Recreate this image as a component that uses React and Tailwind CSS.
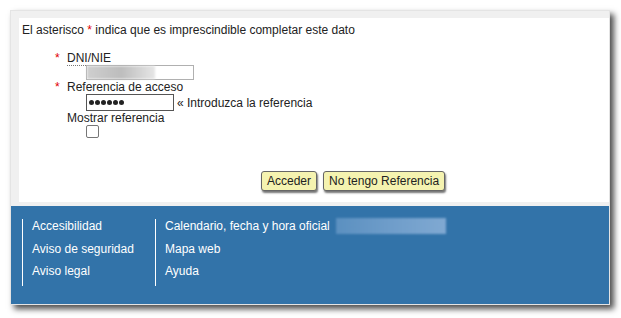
const Req = () => <span className="w-[12px] text-[#e00000]">*</span>;

const FooterCol = ({ links, extra, className = "" }) => (
  <ul className={`flex flex-col gap-[8.5px] border-l border-white pb-[8px] pl-[9px] ${className}`}>
    {links.map((l, i) => (
      <li key={l} className="flex h-[14px] items-center leading-[14px]">
        <span>{l}</span>
        {i === 0 && extra}
      </li>
    ))}
  </ul>
);

export default function App() {
  return (
    <div className="min-h-[318px] bg-white pl-[10px] pt-[10px] font-['Liberation_Sans',Arial,sans-serif] text-[12px] text-[#222]">
      <div className="w-[600px] border border-[#e4e4e4] bg-[#f0f0f0] shadow-[4px_4px_6px_rgba(0,0,0,0.7)]">
        <div className="pl-[8px] pt-[7px]">
          <div className="h-[184px] bg-white pl-[3px] pt-[5px]">
            <p className="leading-[14px]">
              El asterisco <span className="text-[#e00000]">*</span> indica que es imprescindible completar este dato
            </p>

            <div className="mt-[14px] pl-[33px]">
              <div className="flex leading-[14px]">
                <Req />
                <span>DNI/NIE</span>
              </div>
              <div className="flex">
                <div className="ml-[12px] w-[19px] border-t border-dotted border-[#777]" />
                <div className="flex h-[15px] w-[108px] border border-[#b0b0b0] bg-white">
                  <div className="h-full w-[68px] bg-gradient-to-r from-[#cfcfcf] via-[#bdbdbd] to-[#e6e6e6] blur-[1px]" />
                </div>
              </div>
              <div className="flex leading-[14px]">
                <Req />
                <span>Referencia de acceso</span>
              </div>
              <div className="flex items-center pl-[31px]">
                <div className="flex h-[17px] w-[88px] items-center gap-[1px] border border-[#555] bg-white pl-[2px]">
                  {[0, 1, 2, 3, 4, 5].map((i) => (
                    <span key={i} className="h-[5px] w-[5px] rounded-full bg-[#222]" />
                  ))}
                </div>
                <span className="ml-[3px] leading-[14px]">« Introduzca la referencia</span>
              </div>
              <div className="pl-[12px] leading-[14px]">Mostrar referencia</div>
              <div className="pl-[31px]">
                <div className="h-[13px] w-[13px] rounded-[2px] border border-[#767676] bg-white" />
              </div>
            </div>

            <div className="mt-[33px] flex gap-[6px] pl-[239px]">
              <button className="h-[20px] rounded-[3px] border border-[#666] bg-[#f5f3b0] px-[5px] leading-[14px] text-[#222] shadow-[1px_2px_2px_rgba(0,0,0,0.55)]">
                Acceder
              </button>
              <button className="h-[20px] rounded-[3px] border border-[#666] bg-[#f5f3b0] px-[5px] leading-[14px] text-[#222] shadow-[1px_2px_2px_rgba(0,0,0,0.55)]">
                No tengo Referencia
              </button>
            </div>
          </div>
        </div>

        <div className="mt-[4px] flex h-[98px] items-start bg-[#3273a9] pl-[11px] pt-[13px] text-white">
          <FooterCol links={["Accesibilidad", "Aviso de seguridad", "Aviso legal"]} className="w-[133px]" />
          <FooterCol
            links={["Calendario, fecha y hora oficial", "Mapa web", "Ayuda"]}
            extra={
              <span className="ml-[6px] h-[16px] w-[110px] shrink-0 bg-gradient-to-r from-[#5b90c0] via-[#6f9dca] to-[#80a9d2] blur-[1px]" />
            }
          />
        </div>
      </div>
    </div>
  );
}
